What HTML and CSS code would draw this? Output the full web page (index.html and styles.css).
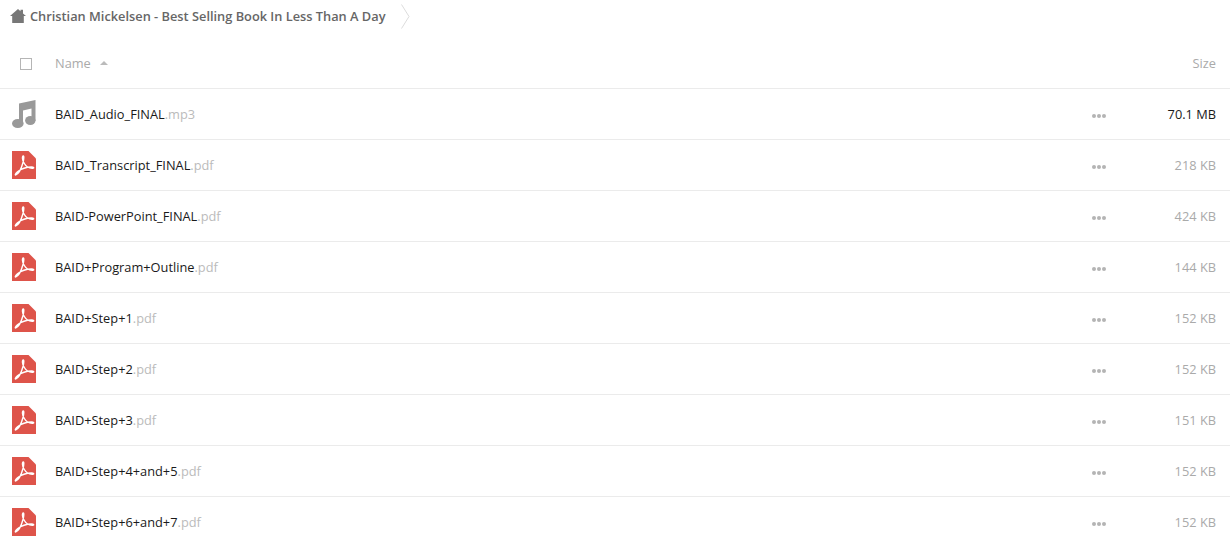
FILE: index.html
```html
<!DOCTYPE html>
<html>
<head>
<meta charset="UTF-8">
<title>Christian Mickelsen - Best Selling Book In Less Than A Day</title>
<link rel="stylesheet" href="styles.css">
</head>
<body>
<svg class="sprites" width="0" height="0">
	<symbol id="pdf" viewBox="0 0 24 28">
		<path d="M0 0H16.500L24 7.500V28H0Z" fill="#de544a"/>
		<path d="M3.500 24C6.500 23 9.500 17 11 11.500C12 7.500 12 5 11.300 5C10 5 10.200 9 12 12C14 15.500 17.500 17.500 20.800 17.300C22.300 17.200 22 16 19.500 16C15 16 9 18 5.500 20.800C3.500 22.500 3 24 3.500 24Z" fill="none" stroke="#fff" stroke-width="1.400"/>
	</symbol>
	<symbol id="audio" viewBox="0 0 24 28">
		<path d="M7 3.500L23.500 0V21H19.500V8.500L11 10.500V24.500H7Z" fill="#999"/>
		<ellipse cx="5.800" cy="23.500" rx="5.800" ry="4.500" fill="#999"/>
		<ellipse cx="18.300" cy="20.500" rx="5.200" ry="4.500" fill="#999"/>
	</symbol>
</svg>

<div class="crumbs">
	<svg class="home" viewBox="0 0 16 14" width="16" height="14"><path d="M8 0L10.500 2.200V0.800H13V4.400L16 7H13.800V14H2.200V7H0Z" fill="#777"/></svg>
	<span class="crumb-name">Christian Mickelsen - Best Selling Book In Less Than A Day</span>
	<svg class="chevron" viewBox="0 0 9 25" width="9" height="25"><path d="M0.500 0.500L8 12.500L0.500 24.500" fill="none" stroke="#dcdcdc"/></svg>
</div>

<div class="list-head">
	<span class="check"></span>
	<span class="head-name">Name</span>
	<span class="sort-arrow"></span>
	<span class="head-size">Size</span>
</div>

<div class="row">
	<svg class="ficon"><use href="#audio"/></svg>
	<span class="fname">BAID_Audio_FINAL<span class="ext">.mp3</span></span>
	<span class="dots"><i></i><i></i><i></i></span>
	<span class="fsize dark">70.1 MB</span>
</div>
<div class="row">
	<svg class="ficon"><use href="#pdf"/></svg>
	<span class="fname">BAID_Transcript_FINAL<span class="ext">.pdf</span></span>
	<span class="dots"><i></i><i></i><i></i></span>
	<span class="fsize">218 KB</span>
</div>
<div class="row">
	<svg class="ficon"><use href="#pdf"/></svg>
	<span class="fname">BAID-PowerPoint_FINAL<span class="ext">.pdf</span></span>
	<span class="dots"><i></i><i></i><i></i></span>
	<span class="fsize">424 KB</span>
</div>
<div class="row">
	<svg class="ficon"><use href="#pdf"/></svg>
	<span class="fname">BAID+Program+Outline<span class="ext">.pdf</span></span>
	<span class="dots"><i></i><i></i><i></i></span>
	<span class="fsize">144 KB</span>
</div>
<div class="row">
	<svg class="ficon"><use href="#pdf"/></svg>
	<span class="fname">BAID+Step+1<span class="ext">.pdf</span></span>
	<span class="dots"><i></i><i></i><i></i></span>
	<span class="fsize">152 KB</span>
</div>
<div class="row">
	<svg class="ficon"><use href="#pdf"/></svg>
	<span class="fname">BAID+Step+2<span class="ext">.pdf</span></span>
	<span class="dots"><i></i><i></i><i></i></span>
	<span class="fsize">152 KB</span>
</div>
<div class="row">
	<svg class="ficon"><use href="#pdf"/></svg>
	<span class="fname">BAID+Step+3<span class="ext">.pdf</span></span>
	<span class="dots"><i></i><i></i><i></i></span>
	<span class="fsize">151 KB</span>
</div>
<div class="row">
	<svg class="ficon"><use href="#pdf"/></svg>
	<span class="fname">BAID+Step+4+and+5<span class="ext">.pdf</span></span>
	<span class="dots"><i></i><i></i><i></i></span>
	<span class="fsize">152 KB</span>
</div>
<div class="row">
	<svg class="ficon"><use href="#pdf"/></svg>
	<span class="fname">BAID+Step+6+and+7<span class="ext">.pdf</span></span>
	<span class="dots"><i></i><i></i><i></i></span>
	<span class="fsize">152 KB</span>
</div>
</body>
</html>
```

FILE: styles.css
```css
* {
	font-family: "Open Sans", "Liberation Sans", sans-serif;
	box-sizing: border-box;
}

html {
	overflow: hidden;
}

body {
	margin: 0;
	background-color: #FFF;
	font-size: 12.8px;
}

.sprites {
	display: block;
	height: 0;
}

.crumbs {
	display: flex;
	align-items: center;
	height: 32px;
	padding-left: 10px;
}
.crumbs .home {
	margin-right: 4px;
}
.crumb-name {
	color: #666;
	font-weight: 600;
	font-size: 12.8px;
}
.crumbs .chevron {
	margin-left: 16px;
}

.list-head {
	display: flex;
	align-items: center;
	height: 57px;
	padding: 5px 14px 0 20px;
	border-bottom: 1px solid #EBEBEB;
	color: #AAA;
}
.check {
	width: 12px;
	height: 12px;
	margin-top: 2px;
	margin-right: 23px;
	border: 1px solid #B5B5B5;
}
.sort-arrow {
	width: 0;
	height: 0;
	margin-left: 9px;
	border-left: 4px solid transparent;
	border-right: 4px solid transparent;
	border-bottom: 4px solid #BBB;
}
.head-size {
	margin-left: auto;
}

.row {
	display: flex;
	align-items: center;
	height: 51px;
	padding: 0 14px 0 12px;
	border-bottom: 1px solid #EBEBEB;
}
.ficon {
	width: 24px;
	height: 28px;
	margin-right: 19px;
}
.fname {
	color: #1A1A1A;
	flex: 1;
}
.ext {
	color: #BBB;
}
.dots {
	display: flex;
	gap: 1px;
	padding-top: 4px;
}
.dots i {
	width: 4px;
	height: 4px;
	border-radius: 50%;
	background-color: #B4B4B4;
}
.fsize {
	width: 110px;
	text-align: right;
	color: #AAA;
}
.fsize.dark {
	color: #1A1A1A;
}
```
